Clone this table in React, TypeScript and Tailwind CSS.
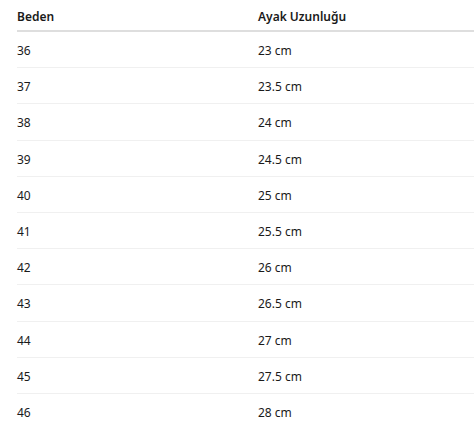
const rows = [
  ['36', '23 cm'],
  ['37', '23.5 cm'],
  ['38', '24 cm'],
  ['39', '24.5 cm'],
  ['40', '25 cm'],
  ['41', '25.5 cm'],
  ['42', '26 cm'],
  ['43', '26.5 cm'],
  ['44', '27 cm'],
  ['45', '27.5 cm'],
  ['46', '28 cm'],
];

export default function App() {
  return (
    <div className="min-h-screen bg-white pl-[17px] text-[12px] text-[#1a1a1a] font-['Noto_Sans',sans-serif]">
      {/* Size table header */}
      <div className="flex h-[32px] items-center border-b-2 border-[#dedede] pt-[3px] font-semibold">
        <div className="w-[241px]">Beden</div>
        <div>Ayak Uzunluğu</div>
      </div>

      {rows.map(([size, length]) => (
        <div
          key={size}
          className="flex h-[36.2px] items-center border-b border-[#f0f0f0] pt-[3px]"
        >
          <div className="w-[241px]">{size}</div>
          <div>{length}</div>
        </div>
      ))}
    </div>
  );
}
